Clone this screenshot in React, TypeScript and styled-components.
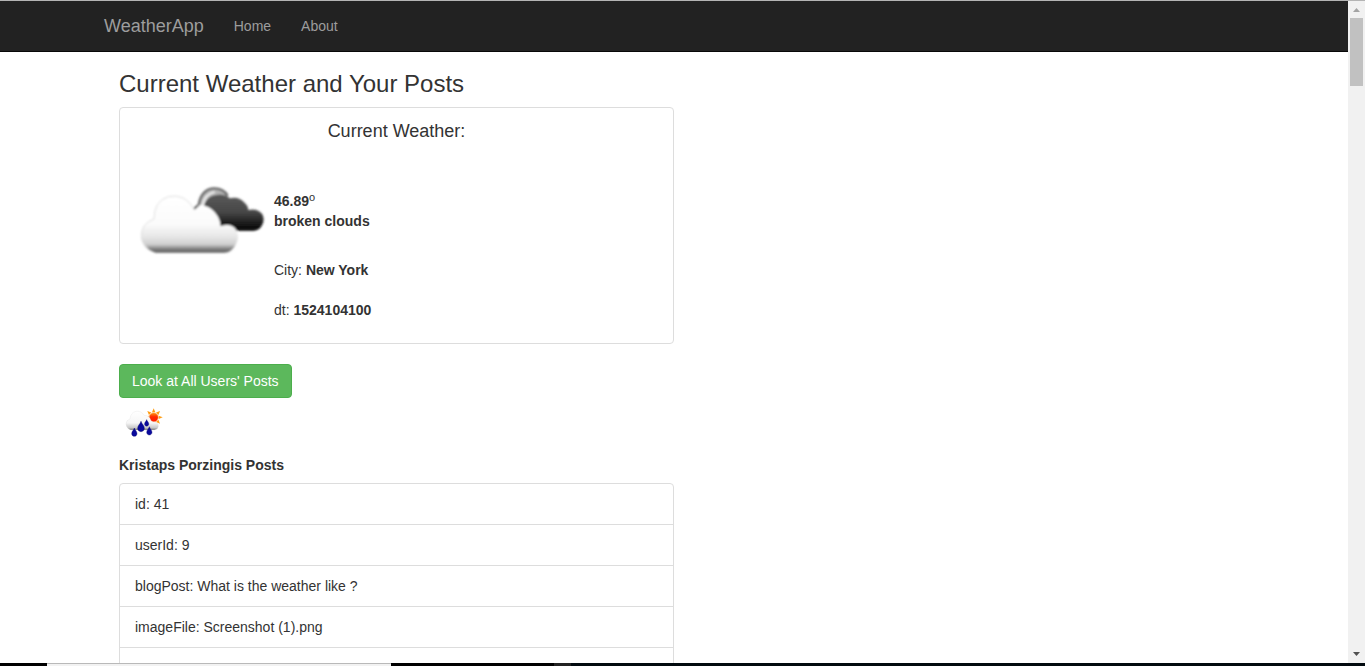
import React from 'react';
import styled, { createGlobalStyle } from 'styled-components';

const GlobalStyle = createGlobalStyle`
  *, *::before, *::after { box-sizing: border-box; }
  body {
    margin: 0;
    background: #fff;
    color: #333;
    font-family: "Liberation Sans", Arial, sans-serif;
    font-size: 14px;
    line-height: 20px;
  }
`;

const Shell = styled.div`
  display: flex;
  flex-direction: column;
  height: 100vh;
  overflow: hidden;
  border-top: 1px solid #b4b4b4;
`;

const Viewport = styled.div`
  display: flex;
  flex: 1;
  min-height: 0;
`;

const Page = styled.div`
  flex: 1;
  min-width: 0;
  overflow: hidden;
`;

const Navbar = styled.nav`
  background: #222;
  border-bottom: 1px solid #080808;
`;

const Container = styled.div`
  max-width: 1170px;
  margin: 0 auto;
  padding: 0 15px;
`;

const NavRow = styled(Container)`
  display: flex;
  align-items: center;
  height: 50px;
`;

const Brand = styled.a`
  padding: 15px 15px 15px 0;
  color: #9d9d9d;
  font-size: 18px;
  text-decoration: none;
`;

const NavLinks = styled.ul`
  display: flex;
  margin: 0;
  padding: 0;
  list-style: none;
`;

const NavLink = styled.a`
  display: block;
  padding: 15px;
  color: #9d9d9d;
  text-decoration: none;
`;

const Column = styled.main`
  width: 100%;
  max-width: 585px;
  padding: 19px 15px 0;
`;

const Title = styled.h3`
  margin: 0 0 10px;
  font-size: 24px;
  font-weight: 400;
  line-height: 26px;
`;

const Card = styled.section`
  min-height: 237px;
  margin-bottom: 20px;
  padding: 13px 4px 23px;
  border: 1px solid #ddd;
  border-radius: 4px;
`;

const CardTitle = styled.h4`
  margin: 0;
  font-size: 18px;
  font-weight: 400;
  text-align: center;
`;

const Forecast = styled.div`
  display: flex;
  padding-top: 9px;
`;

const Details = styled.div`
  padding-top: 41px;
`;

const Line = styled.p<{ $gap?: number }>`
  margin: 0 0 ${({ $gap = 0 }) => $gap}px;
`;

const Degree = styled.sup`
  position: relative;
  top: -5px;
  font-size: 11px;
  font-weight: 400;
  line-height: 0;
  vertical-align: baseline;
`;

const PostsButton = styled.button`
  display: block;
  padding: 6px 12px;
  border: 1px solid #4cae4c;
  border-radius: 4px;
  background: #5cb85c;
  color: #fff;
  font: inherit;
  cursor: pointer;
`;

const Icon = styled.svg<{ $size: number }>`
  display: block;
  flex: none;
  width: ${({ $size }) => $size}px;
  height: ${({ $size }) => $size}px;
`;

const PostsTitle = styled.h5`
  margin: 7px 0 8px;
  font-size: 14px;
  font-weight: 700;
`;

const PostList = styled.ul`
  margin: 0;
  padding: 0;
  list-style: none;
  border: 1px solid #ddd;
  border-radius: 4px;
`;

const PostItem = styled.li`
  min-height: 40px;
  padding: 10px 15px;
  & + & { border-top: 1px solid #ddd; }
`;

const Scrollbar = styled.div`
  display: flex;
  flex-direction: column;
  align-items: center;
  width: 17px;
  background: #f1f1f1;
`;

const ScrollArrow = styled.svg`
  display: block;
  width: 17px;
  height: 17px;
`;

const Thumb = styled.div`
  width: 13px;
  height: 68px;
  margin-bottom: auto;
  background: #c1c1c1;
`;

const Taskbar = styled.div`
  display: flex;
  flex: none;
  height: 3px;
  background: #020a0f;
`;

const TaskSegment = styled.div<{ $width: number; $color: string; $edge?: string }>`
  width: ${({ $width }) => $width}px;
  background: ${({ $color }) => $color};
  border-top: 1px solid ${({ $edge, $color }) => $edge ?? $color};
`;

const BrokenClouds = () => (
  <Icon $size={150} viewBox="-18 -75 450 450" role="img" aria-label="broken clouds">
    <defs>
      <linearGradient id="lightCloud" gradientUnits="userSpaceOnUse" x1="0" y1="62" x2="0" y2="234">
        <stop offset="0" stopColor="#fff" />
        <stop offset=".5" stopColor="#fbfbfb" />
        <stop offset=".72" stopColor="#e6e6e6" />
        <stop offset=".85" stopColor="#cfcfcf" />
        <stop offset=".92" stopColor="#888" />
        <stop offset="1" stopColor="#555" />
      </linearGradient>
      <linearGradient id="darkCloud" gradientUnits="userSpaceOnUse" x1="0" y1="55" x2="0" y2="166">
        <stop offset="0" stopColor="#5a5a5a" />
        <stop offset=".5" stopColor="#484848" />
        <stop offset=".75" stopColor="#252525" />
        <stop offset="1" stopColor="#000" />
      </linearGradient>
      <filter id="soft"><feGaussianBlur stdDeviation="3.5" /></filter>
    </defs>
    <g filter="url(#soft)">
      <path d="M208 92 Q212 43 250 39 Q284 38 296 68 L262 62 Q230 62 222 88 Z" fill="#b4b4b4" />
      <path d="M190 103 L206 90 Q214 43 250 40 Q280 39 293 62" fill="none" stroke="#666" strokeWidth="7" />
      <path d="M217 90 Q224 58 254 51" fill="none" stroke="#eee" strokeWidth="6" />
      <path d="M222 91 Q230 63 258 60 Q282 55 299 70 Q326 63 342 82 Q354 92 355 105 Q383 99 397 118 Q406 137 394 154 Q386 167 371 167 L280 167 L220 150 Z" fill="url(#darkCloud)" />
      <path d="M200 106 Q206 84 223 92 Q246 97 262 122 Q272 138 271 156 L240 156 Z" fill="#fff" />
      <path d="M192 104 Q220 99 241 107 Q268 119 271 153 Q309 143 320 168 Q329 187 317 209 Q305 232 282 233 L77 233 Q35 221 34 184 Q33 146 72 132 Q72 78 115 65 Q165 54 192 104 Z" fill="url(#lightCloud)" />
      <path d="M55 220 Q34 206 34 184 Q33 146 72 132 Q72 78 115 65 Q165 54 192 102" fill="none" stroke="#dedede" strokeWidth="3" />
    </g>
  </Icon>
);

const RAYS = [0, 45, 90, 135, 180, 225, 270, 315];
const DROPS = [[58, 97, 1], [78, 80, 1.25], [95, 69, 0.8], [103, 93, 1]];

const SunShower = () => (
  <Icon $size={50} viewBox="12 -6 150 150" role="img" aria-label="sun and rain">
    <defs>
      <linearGradient id="rainCloud" gradientUnits="userSpaceOnUse" x1="0" y1="34" x2="0" y2="92">
        <stop offset="0" stopColor="#fff" />
        <stop offset=".6" stopColor="#f6f6f6" />
        <stop offset=".85" stopColor="#c8c8c8" />
        <stop offset="1" stopColor="#555" />
      </linearGradient>
      <linearGradient id="sunDisc" x1="0" y1="0" x2="0" y2="1">
        <stop offset="0" stopColor="#ff9a10" />
        <stop offset=".45" stopColor="#ff2a00" />
        <stop offset="1" stopColor="#ff1a00" />
      </linearGradient>
    </defs>
    {RAYS.map((angle) => (
      <path key={angle} d="M111 37 L116 25 L121 37 Z" fill="#ff9d14" transform={`rotate(${angle} 116 52)`} />
    ))}
    <circle cx="116" cy="52" r="14" fill="url(#sunDisc)" stroke="#ffc98a" strokeWidth="2" />
    <path d="M47 90 Q33 84 33 72 Q33 60 45 57 Q47 37 63 34 Q79 32 87 46 Q102 45 108 62 Q113 67 119 66 Q131 69 130 79 Q129 89 118 90 Z" fill="url(#rainCloud)" stroke="#e0e0e0" strokeWidth="1" />
    {DROPS.map(([x, y, scale]) => (
      <path
        key={x}
        d="M0 -13 C2 -6 8 -3 8 4 C8 9 4 12 0 12 C-4 12 -8 9 -8 4 C-8 -3 -2 -6 0 -13 Z"
        fill="#0a0a9c"
        stroke="#000068"
        strokeWidth="1"
        transform={`translate(${x} ${y}) scale(${scale})`}
      />
    ))}
  </Icon>
);

const posts = ['id: 41', 'userId: 9', 'blogPost: What is the weather like ?', 'imageFile: Screenshot (1).png', ''];

export default function App() {
  return (
    <>
      <GlobalStyle />
      <Shell>
        <Viewport>
          <Page>
            <Navbar>
              <NavRow>
                <Brand href="#">WeatherApp</Brand>
                <NavLinks>
                  <li><NavLink href="#home">Home</NavLink></li>
                  <li><NavLink href="#about">About</NavLink></li>
                </NavLinks>
              </NavRow>
            </Navbar>
            <Container>
              <Column>
                <Title>Current Weather and Your Posts</Title>
                <Card>
                  <CardTitle>Current Weather:</CardTitle>
                  <Forecast>
                    <BrokenClouds />
                    <Details>
                      <Line><b>46.89<Degree>o</Degree></b></Line>
                      <Line $gap={29}><b>broken clouds</b></Line>
                      <Line $gap={20}>City: <b>New York</b></Line>
                      <Line>dt: <b>1524104100</b></Line>
                    </Details>
                  </Forecast>
                </Card>
                <PostsButton type="button">Look at All Users' Posts</PostsButton>
                <SunShower />
                <PostsTitle>Kristaps Porzingis Posts</PostsTitle>
                <PostList>
                  {posts.map((post, i) => <PostItem key={i}>{post}</PostItem>)}
                </PostList>
              </Column>
            </Container>
          </Page>
          <Scrollbar aria-hidden="true">
            <ScrollArrow viewBox="0 0 17 17"><path d="M5 11 L8.5 7 L12 11 Z" fill="#a3a3a3" /></ScrollArrow>
            <Thumb />
            <ScrollArrow viewBox="0 0 17 17"><path d="M5 6 L12 6 L8.5 10 Z" fill="#505050" /></ScrollArrow>
          </Scrollbar>
        </Viewport>
        <Taskbar aria-hidden="true">
          <TaskSegment $width={47} $color="#000" />
          <TaskSegment $width={344} $color="#f2f2f2" $edge="#b9b9b9" />
          <TaskSegment $width={163} $color="#000" />
          <TaskSegment $width={17} $color="#222" />
        </Taskbar>
      </Shell>
    </>
  );
}
